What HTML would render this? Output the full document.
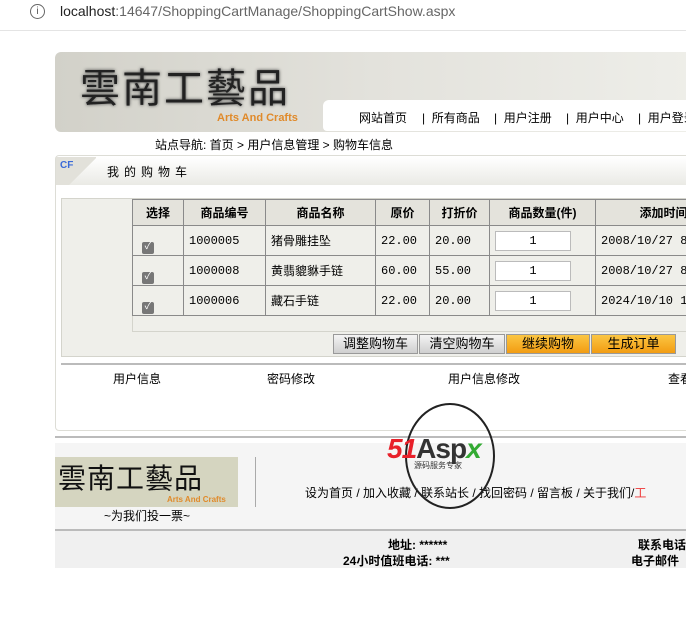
<!DOCTYPE html>
<html><head><meta charset="utf-8"><style>
*{margin:0;padding:0;box-sizing:border-box}
body{width:686px;height:632px;overflow:hidden;background:#fff;font-family:"Liberation Sans","Noto Sans CJK SC",sans-serif;font-size:12px;color:#000;position:relative}
.a{position:absolute;white-space:nowrap}
table{border-collapse:collapse;position:absolute;left:132px;top:199px;width:600px;background:#efefea}
td,th{border:1px solid #8a8a8a;height:30px;padding:0 5px;font-size:12px;font-family:"Liberation Mono","Noto Sans CJK SC",monospace;text-align:left}
th{height:26px;background:#e4e3dc;text-align:center;font-family:"Liberation Sans","Noto Sans CJK SC",sans-serif}
.cb{display:inline-block;width:12px;height:12px;background:#777;border-radius:2px;color:#fff;font-size:10px;line-height:12px;text-align:center;margin-top:14px}
.inp{display:inline-block;width:76px;height:20px;border:1px solid #bbb;background:#fff;text-align:center;line-height:19px}
.btn{position:absolute;top:334px;height:20px;border:1px solid #999;font-size:13px;text-align:center;line-height:18px;background:linear-gradient(#f4f4f4,#cfcfcf)}
.or{background:linear-gradient(#fbc643,#f29c12)}
</style></head><body>
<div class="a" style="left:0;top:0;width:686px;height:31px;border-bottom:1px solid #e4e4e4"></div>
<div class="a" style="left:30px;top:4px;width:15px;height:15px;border:1px solid #666;border-radius:50%;font-size:10px;line-height:13px;text-align:center;color:#555">i</div>
<div class="a" style="left:60px;top:3px;font-size:14px;color:#222">localhost<span style="color:#666">:14647/ShoppingCartManage/ShoppingCartShow.aspx</span></div>

<div class="a" style="left:55px;top:52px;width:640px;height:80px;border-radius:6px 0 0 6px;background:linear-gradient(90deg,#d2d1c9,#e3e2dc 50%,#eeeee9)"></div>
<div class="a" style="left:80px;top:56px;font-size:40px;letter-spacing:2px;color:#222;font-family:'Noto Sans CJK SC',sans-serif;text-shadow:0 0 3px #444">雲南工藝品</div>
<div class="a" style="left:217px;top:112px;font-size:11px;font-weight:bold;color:#e08a2a">Arts And Crafts</div>
<div class="a" style="left:323px;top:100px;width:380px;height:31px;background:#fff;border-radius:6px 0 0 4px"></div>
<div class="a" style="left:359px;top:109px">网站首页</div>
<div class="a" style="left:422px;top:109px">|&nbsp; 所有商品</div>
<div class="a" style="left:494px;top:109px">|&nbsp; 用户注册</div>
<div class="a" style="left:566px;top:109px">|&nbsp; 用户中心</div>
<div class="a" style="left:638px;top:109px">|&nbsp; 用户登录</div>
<div class="a" style="left:155px;top:136px">站点导航: 首页 &gt; 用户信息管理 &gt; 购物车信息</div>

<div class="a" style="left:55px;top:155px;width:640px;height:276px;border:1px solid #ddddd6;border-radius:4px"></div>
<div class="a" style="left:56px;top:157px;width:640px;height:28px;background:linear-gradient(#fff,#eaeae5)"></div>
<div class="a" style="left:56px;top:157px;width:40px;height:28px;background:linear-gradient(135deg,#e2e1da 60%,transparent 61%)"></div>
<div class="a" style="left:60px;top:160px;font-size:10px;font-weight:bold;color:#3a6ad8">CF</div>
<div class="a" style="left:107px;top:163px;letter-spacing:5px">我的购物车</div>

<div class="a" style="left:61px;top:198px;width:640px;height:159px;background:#efefea;border:1px solid #d4d4cc"></div>
<div class="a" style="left:132px;top:315px;width:560px;height:17px;border:1px solid #d4d4cc;border-top:none"></div>
<table>
<tr><th style="width:51px">选择</th><th style="width:82px">商品编号</th><th style="width:110px">商品名称</th><th style="width:54px">原价</th><th style="width:60px">打折价</th><th style="width:106px">商品数量(件)</th><th>添加时间</th></tr>
<tr><td style="padding-left:9px"><span class="cb">✓</span></td><td>1000005</td><td>猪骨雕挂坠</td><td>22.00</td><td>20.00</td><td><span class="inp">1</span></td><td>2008/10/27 8:45</td></tr>
<tr><td style="padding-left:9px"><span class="cb">✓</span></td><td>1000008</td><td>黄翡貔貅手链</td><td>60.00</td><td>55.00</td><td><span class="inp">1</span></td><td>2008/10/27 8:45</td></tr>
<tr><td style="padding-left:9px"><span class="cb">✓</span></td><td>1000006</td><td>藏石手链</td><td>22.00</td><td>20.00</td><td><span class="inp">1</span></td><td>2024/10/10 18:1</td></tr>
</table>
<div class="btn" style="left:333px;width:85px">调整购物车</div>
<div class="btn" style="left:419px;width:86px">清空购物车</div>
<div class="btn or" style="left:506px;width:84px">继续购物</div>
<div class="btn or" style="left:591px;width:85px">生成订单</div>
<div class="a" style="left:61px;top:363px;width:630px;height:2px;background:#bbb"></div>
<div class="a" style="left:113px;top:370px">用户信息</div>
<div class="a" style="left:267px;top:370px">密码修改</div>
<div class="a" style="left:448px;top:370px">用户信息修改</div>
<div class="a" style="left:668px;top:370px">查看</div>

<div class="a" style="left:55px;top:436px;width:640px;height:2px;background:#bbb"></div>
<div class="a" style="left:55px;top:443px;width:640px;height:86px;background:#f5f5f5"></div>
<div class="a" style="left:55px;top:457px;width:183px;height:50px;background:#d5d5c0"></div>
<div class="a" style="left:58px;top:457px;font-size:28px;letter-spacing:1px;color:#111;font-family:'Noto Sans CJK SC',sans-serif">雲南工藝品</div>
<div class="a" style="left:167px;top:495px;font-size:8px;font-weight:bold;color:#e08a2a">Arts And Crafts</div>
<div class="a" style="left:255px;top:457px;width:1px;height:50px;background:#aaa"></div>
<div class="a" style="left:104px;top:507px">~为我们投一票~</div>
<div class="a" style="left:305px;top:484px">设为首页 / 加入收藏 / 联系站长 / 找回密码 / 留言板 / 关于我们/<span style="color:#e33">工</span></div>
<div class="a" style="left:405px;top:403px;width:90px;height:106px;border:2px solid #222;border-radius:50%"></div>
<div class="a" style="left:387px;top:433px;font-size:28px;font-weight:bold;font-style:italic;color:#e8202a;letter-spacing:-1px">51<span style="color:#333;font-style:normal">Asp</span><span style="color:#3a3">x</span></div>
<div class="a" style="left:414px;top:460px;font-size:8px;color:#333">源码服务专家</div>
<div class="a" style="left:55px;top:529px;width:640px;height:2px;background:#bbb"></div>
<div class="a" style="left:55px;top:531px;width:640px;height:37px;background:#f0f0f0"></div>
<div class="a" style="left:388px;top:536px;font-weight:bold">地址: ******</div>
<div class="a" style="left:343px;top:552px;font-weight:bold">24小时值班电话: ***</div>
<div class="a" style="left:638px;top:536px;font-weight:bold">联系电话</div>
<div class="a" style="left:631px;top:552px;font-weight:bold">电子邮件</div>
</body></html>
